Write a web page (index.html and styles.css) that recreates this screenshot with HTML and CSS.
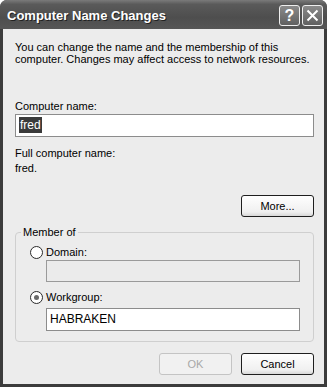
FILE: index.html
```
<!DOCTYPE html>
<html>
<head>
    <meta name="viewport" content="width=device-width, initial-scale=1">
    <link rel="stylesheet" href="styles.css">
</head>

<body>

<div class="window">

    <div class="titlebar">
        <span class="title">Computer Name Changes</span>
        <div class="capbtns">
            <span class="capbtn">?</span>
            <span class="capbtn">
                <svg width="13" height="13" viewBox="0 0 13 13"><path d="M1.5 1.5 L11.5 11.5 M11.5 1.5 L1.5 11.5" stroke="#fff" stroke-width="2" fill="none"/></svg>
            </span>
        </div>
    </div>

    <div class="content">

        <p class="intro">You can change the name and the membership of this computer. Changes may affect access to network resources.</p>

        <label class="lbl" for="cname">Computer name:</label>
        <div class="textbox" id="cname"><span class="sel">fred</span></div>

        <div class="lbl full">Full computer name:</div>
        <div class="lbl">fred.</div>

        <div class="morerow">
            <button class="btn">More...</button>
        </div>

        <fieldset class="group">
            <legend>Member of</legend>

            <div class="radio"><span class="dot"></span>Domain:</div>
            <div class="textbox disabled"></div>

            <div class="radio wg"><span class="dot checked"></span>Workgroup:</div>
            <div class="textbox wgbox">HABRAKEN</div>
        </fieldset>

        <div class="buttons">
            <button class="btn off">OK</button>
            <button class="btn">Cancel</button>
        </div>

    </div>
</div>

</body>
</html>
```

FILE: styles.css
```
body {
    margin: 0;
    background: #fff;
    font-family: "Liberation Sans", Arial, sans-serif;
    font-size: 11px;
    color: #000;
}

.window {
    width: 327px;
    height: 387px;
    display: flex;
    flex-direction: column;
    background: #3c3c3c;
    border-radius: 7px 7px 0 0;
}

.titlebar {
    height: 29px;
    display: flex;
    align-items: center;
    justify-content: space-between;
    padding: 0 4px 0 7px;
    border-radius: 7px 7px 0 0;
    background: linear-gradient(#7a7a7a 0%, #5a5a5a 15%, #4e4e4e 60%, #565656 100%);
}

.title {
    color: #fff;
    font-weight: bold;
    font-size: 13px;
    text-shadow: 1px 1px 0 #222;
    padding-top: 1px;
}

.capbtns {
    display: flex;
    gap: 2px;
    padding-top: 2px;
}

.capbtn {
    width: 19px;
    height: 19px;
    border: 1px solid #eee;
    border-radius: 3px;
    background: linear-gradient(#8a8a8a, #606060);
    color: #fff;
    font-weight: bold;
    font-size: 16px;
    display: flex;
    align-items: center;
    justify-content: center;
}

.content {
    flex: 1;
    margin: 0 3px 3px 3px;
    background: #ececec;
    padding: 12px 10px 0 12px;
    display: flex;
    flex-direction: column;
}

.intro {
    margin: 0;
    line-height: 12px;
}

.lbl {
    display: block;
    line-height: 13px;
}

label.lbl {
    margin-top: 35px;
}

.textbox {
    height: 21px;
    border: 1px solid #8c8c8c;
    background: #fff;
    line-height: 21px;
    padding-left: 3px;
    font-size: 12px;
    margin-top: 1px;
}

.sel {
    background: #3a3a3a;
    color: #fff;
    padding: 1px 1px;
}

.full {
    margin-top: 10px;
    margin-bottom: 2px;
}

.morerow {
    display: flex;
    justify-content: flex-end;
    margin-top: 20px;
}

.btn {
    width: 73px;
    height: 22px;
    border: 1px solid #1e1e1e;
    border-radius: 3px;
    background: linear-gradient(#fefefe, #f0f0f0 80%, #d8d8d8);
    font-family: "Liberation Sans", Arial, sans-serif;
    font-size: 11px;
    color: #000;
    padding: 0;
}

.btn.off {
    border-color: #c4c4c4;
    color: #a8a8a8;
    background: #f1f1f1;
}

.group {
    margin: 9px 0 0 0;
    padding: 6px 13px 10px 14px;
    border: 1px solid #cfcfcf;
    border-radius: 4px;
}

.group legend {
    padding: 0 2px;
    margin-left: -9px;
    line-height: 13px;
}

.radio {
    display: flex;
    align-items: center;
    gap: 3px;
    height: 14px;
}

.radio.wg {
    margin-top: 8px;
}

.group .textbox {
    margin-left: 16px;
    height: 20px;
    line-height: 20px;
}

.group .wgbox {
    margin-top: 4px;
    height: 21px;
    line-height: 21px;
}

.textbox.disabled {
    background: #ebebeb;
    border-color: #9a9a9a;
}

.dot {
    width: 11px;
    height: 11px;
    border: 1px solid #2a2a2a;
    border-radius: 50%;
    background: #fff;
    position: relative;
}

.dot.checked::after {
    content: "";
    position: absolute;
    left: 3px;
    top: 3px;
    width: 5px;
    height: 5px;
    border-radius: 50%;
    background: #6a6a6a;
}

.buttons {
    display: flex;
    justify-content: flex-end;
    gap: 9px;
    margin-top: 11px;
}
```
